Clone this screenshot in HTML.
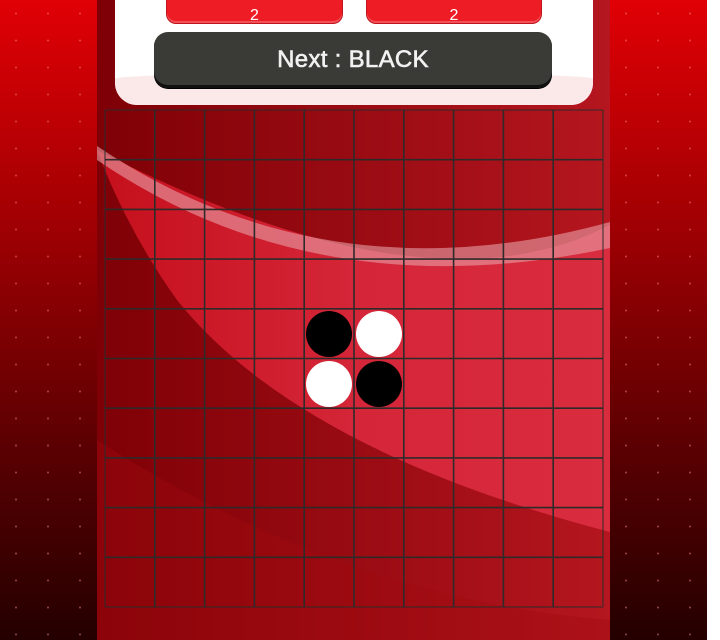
<!DOCTYPE html>
<html><head><style>
html,body{margin:0;padding:0;width:720px;height:640px;overflow:hidden;font-family:"Liberation Sans",sans-serif}
.side{position:absolute;top:0;width:97px;height:640px;background:linear-gradient(#e00005,#a00003 35%,#5a0002 70%,#240000);}
.side::after{content:"";position:absolute;inset:0;background-image:radial-gradient(circle,rgba(255,140,140,.45) 0.8px,transparent 1.2px);background-size:32px 27px;}
#mid{position:absolute;left:97px;top:0;width:513px;height:640px;overflow:hidden}
.card{position:absolute;left:115px;top:-20px;width:478px;height:125px;background:#fff;border-radius:0 0 22px 22px;overflow:hidden}
.card::after{content:"";position:absolute;left:0;right:0;bottom:0;height:32px;background:#fbe9ea;border-radius:70% 70% 0 0/25% 25% 0 0;}
.score{position:absolute;top:-10px;height:33px;background:#ee1c25;border-radius:0 0 10px 10px;border:1px solid #c0141c;border-top:0;box-shadow:inset 0 -2px 0 #f25058;color:#fff;font-size:16px;text-align:center;line-height:52px;z-index:2}
.next{position:absolute;left:154px;top:32px;width:398px;height:56px;background:#3a3b36;border-radius:14px;box-shadow:inset 0 -3px 0 #111,0 1px 0 #000;color:#f2f2f2;font-size:24px;-webkit-text-stroke:.6px #f2f2f2;text-align:center;line-height:56px;z-index:2;letter-spacing:.3px}
.p{position:absolute;width:46px;height:46px;border-radius:50%}
</style></head><body>
<div class="side" style="left:0"></div>
<div class="side" style="left:610px"></div>
<div id="mid">
<svg width="513" height="640" viewBox="0 0 513 640">
<defs>
<linearGradient id="bg" x1="0" y1="0" x2="1" y2="0"><stop offset="0" stop-color="#7e0006"/><stop offset="1" stop-color="#b5161f"/></linearGradient>
<linearGradient id="pk" x1="0" y1="0" x2="1" y2="0"><stop offset="0" stop-color="#c50f1c"/><stop offset=".5" stop-color="#d42638"/><stop offset="1" stop-color="#d92c3e"/></linearGradient>
</defs>
<rect width="513" height="640" fill="url(#bg)"/>
<path d="M0 150 Q30 230 80 300 Q200 450 513 532 L513 225 Q330 320 0 150Z" fill="url(#pk)"/>
<path d="M0 146 Q230 300 513 222 L513 248 Q220 310 0 160Z" fill="#e8a0a8" opacity=".6"/>
<path d="M0 440 Q250 600 513 620 L513 640 L0 640Z" fill="#a00a10" opacity=".4"/>
<g stroke="#2e2a2a" stroke-width="1.6">
<line x1="8" y1="110" x2="506" y2="110" stroke-width="1"/>
<line x1="8" y1="159.7" x2="506" y2="159.7"/><line x1="8" y1="209.4" x2="506" y2="209.4"/><line x1="8" y1="259.1" x2="506" y2="259.1"/><line x1="8" y1="308.8" x2="506" y2="308.8"/><line x1="8" y1="358.5" x2="506" y2="358.5"/><line x1="8" y1="408.2" x2="506" y2="408.2"/><line x1="8" y1="457.9" x2="506" y2="457.9"/><line x1="8" y1="507.6" x2="506" y2="507.6"/><line x1="8" y1="557.3" x2="506" y2="557.3"/>
<line x1="8" y1="607" x2="506" y2="607" stroke-width="1"/>
<line x1="8" y1="110" x2="8" y2="607" stroke-width="1"/>
<line x1="57.8" y1="110" x2="57.8" y2="607"/><line x1="107.6" y1="110" x2="107.6" y2="607"/><line x1="157.4" y1="110" x2="157.4" y2="607"/><line x1="207.2" y1="110" x2="207.2" y2="607"/><line x1="257" y1="110" x2="257" y2="607"/><line x1="306.8" y1="110" x2="306.8" y2="607"/><line x1="356.6" y1="110" x2="356.6" y2="607"/><line x1="406.4" y1="110" x2="406.4" y2="607"/><line x1="456.2" y1="110" x2="456.2" y2="607"/>
<line x1="506" y1="110" x2="506" y2="607" stroke-width="1"/>
</g>
</svg>
</div>
<div class="card"></div>
<div class="score" style="left:166px;width:175px">2</div>
<div class="score" style="left:366px;width:174px">2</div>
<div class="next">Next : BLACK</div>
<div class="p" style="left:306px;top:311px;background:#000"></div>
<div class="p" style="left:356px;top:311px;background:#fff"></div>
<div class="p" style="left:306px;top:361px;background:#fff"></div>
<div class="p" style="left:356px;top:361px;background:#000"></div>
</body></html>
